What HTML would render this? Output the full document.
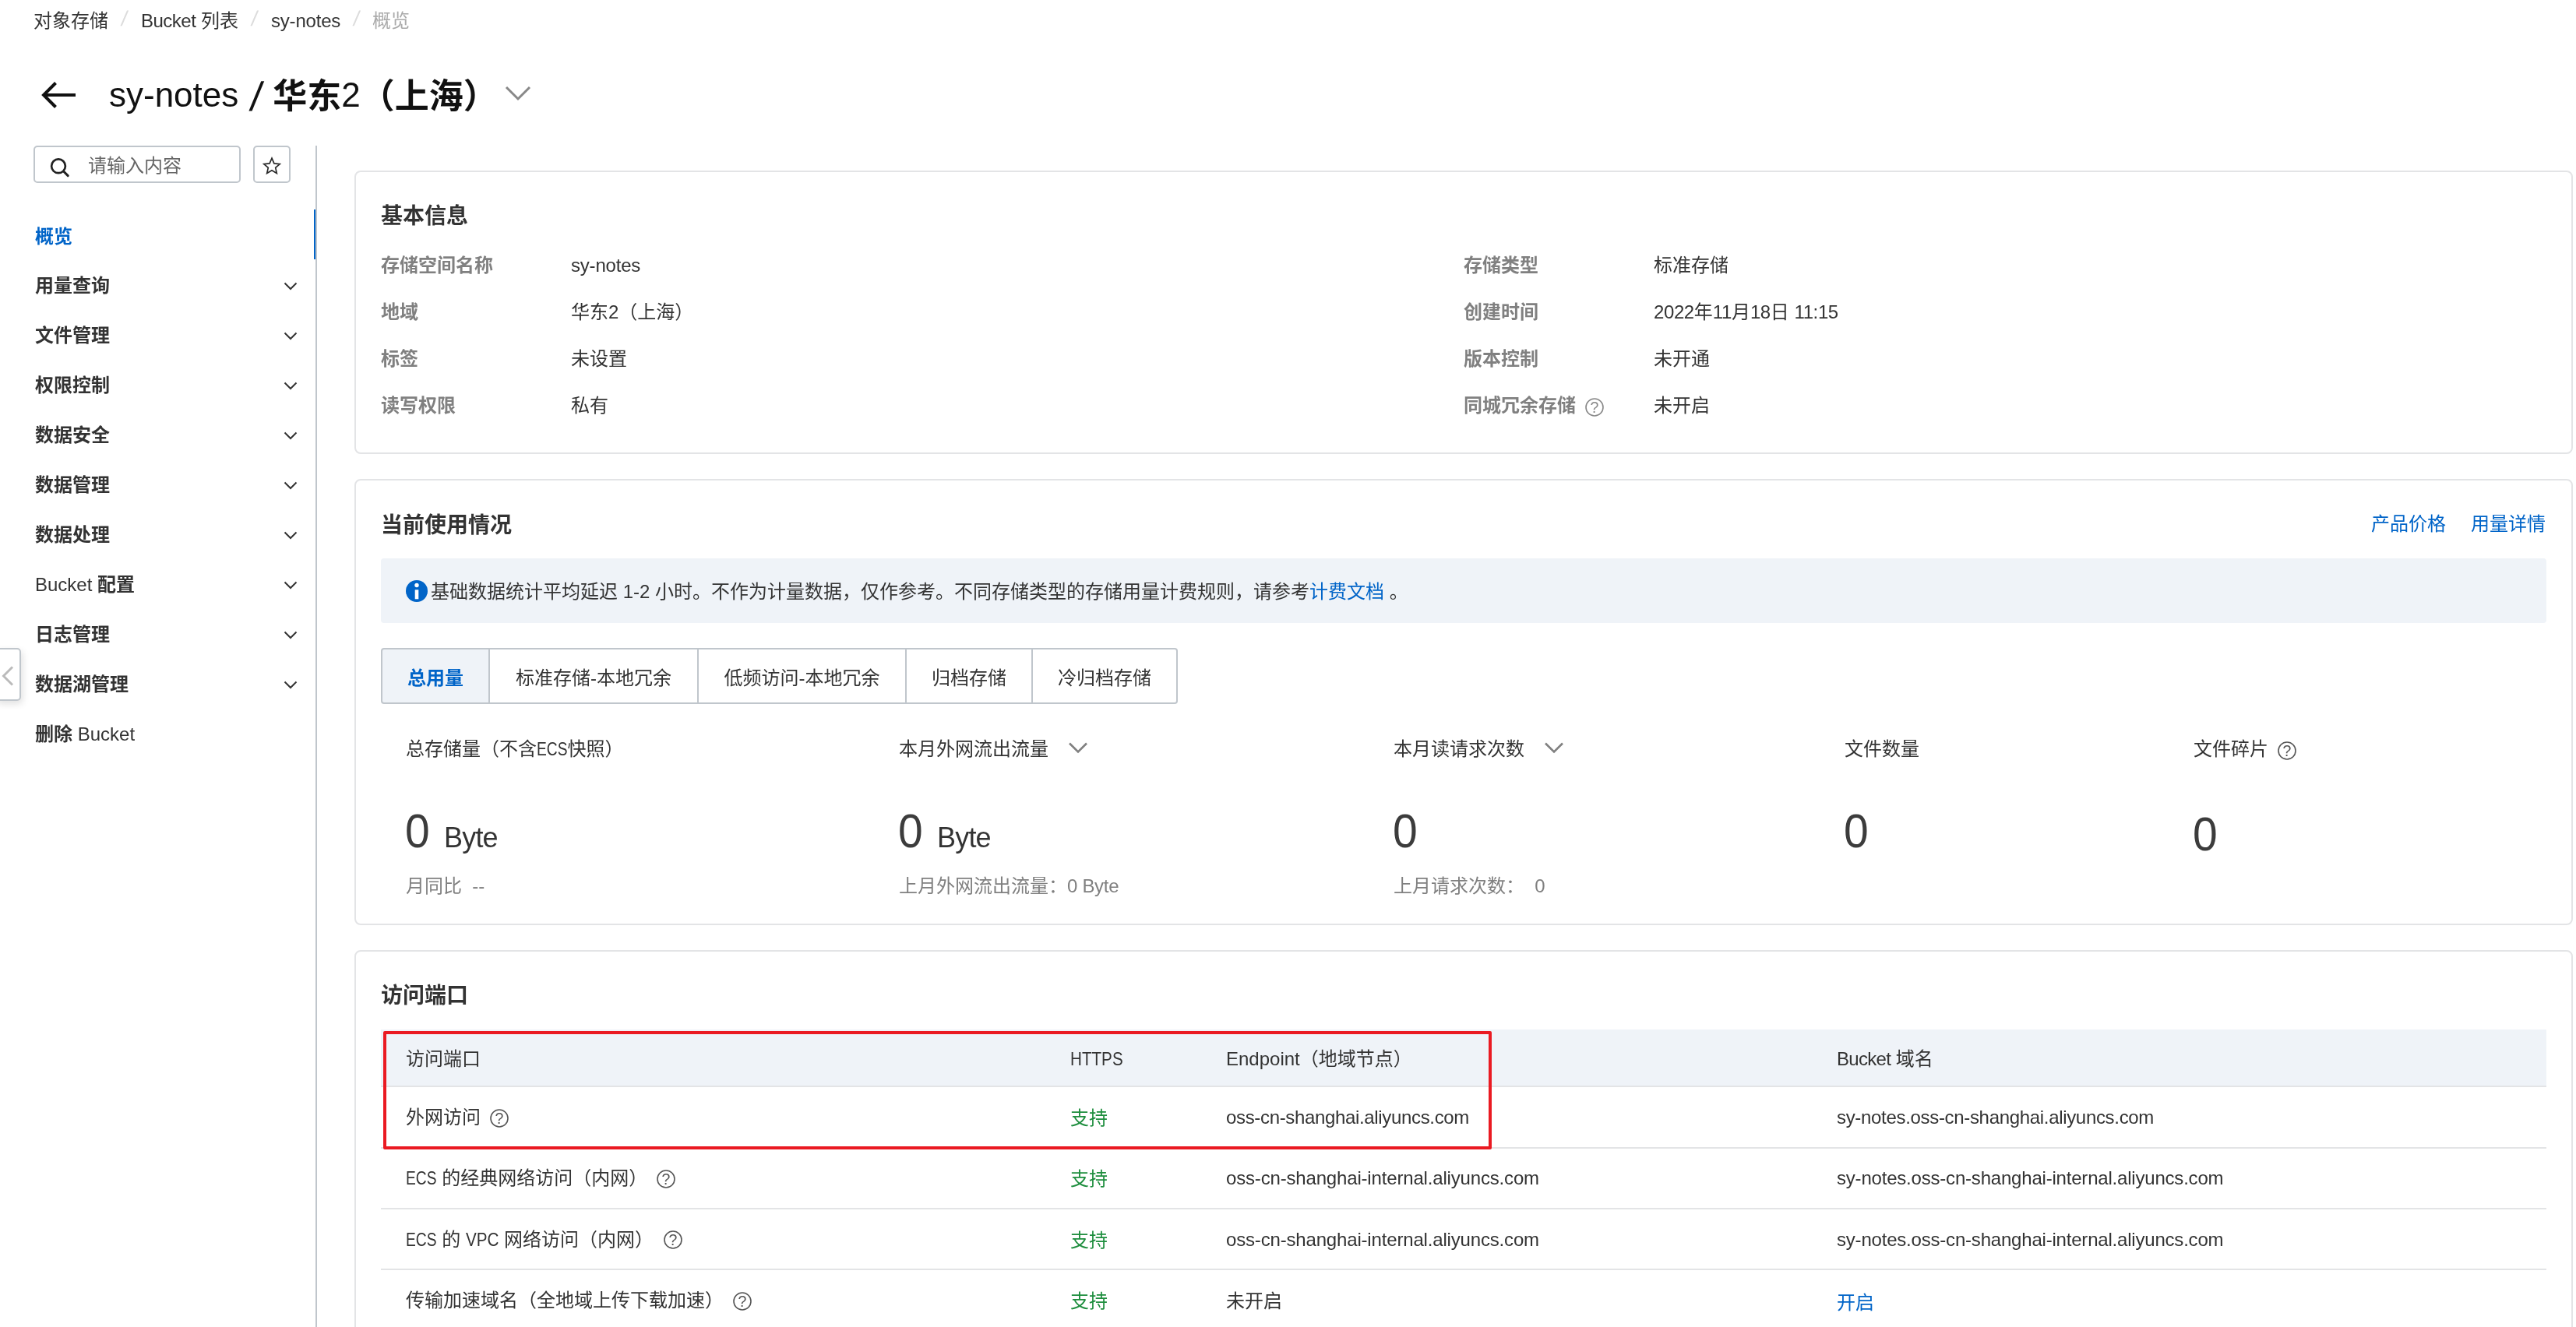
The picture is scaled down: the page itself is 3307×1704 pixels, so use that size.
<!DOCTYPE html>
<html lang="zh-CN">
<head>
<meta charset="utf-8">
<title>sy-notes - 概览</title>
<style>
*{box-sizing:border-box;margin:0;padding:0}
html,body{width:3307px;height:1704px;overflow:hidden;background:#fff}
body{position:relative;will-change:transform;font-family:"Liberation Sans","Noto Sans CJK SC",sans-serif;font-size:24px;color:#333;-webkit-font-smoothing:antialiased}
.t{position:absolute;white-space:nowrap;line-height:40px;height:40px;font-size:24px}
.b{font-weight:700}
.n{font-weight:400}
.g{color:#808080}
.lk{color:#0064c8}
.ok{color:#1e8e3e}
.abs{position:absolute}
.l{letter-spacing:-.3px}
.sx{display:inline-block;transform-origin:0 50%}
.ecs{transform:scaleX(.8);margin-right:-9.9px}
.vpc{transform:scaleX(.86);margin-right:-6.9px}
.sl{color:#dcdcdc;font-size:27px;transform:skewX(-9deg)}
svg{position:absolute;overflow:visible}
.card{position:absolute;left:455px;width:2848px;border:2px solid #e3e4e6;border-radius:8px;background:#fff}
.h{font-size:28px;font-weight:700;color:#333;left:489px}
.lab{font-weight:700;color:#808080}
.hl{position:absolute;left:489px;width:2780px;height:2px;background:#e3e4e6}
.big{font-size:62px;line-height:80px;height:80px;color:#3c3c3c;transform:scaleX(.92);transform-origin:0 50%}
.unit{font-size:36px;line-height:50px;height:50px;color:#333}
.tab{position:absolute;top:832px;height:72px;border:2px solid #c0c6cc;border-left-width:0;line-height:73px;text-align:center;font-size:24px;white-space:nowrap;background:#fff}
</style>
</head>
<body>

<!-- breadcrumb -->
<div class="t" style="left:43px;top:7px">对象存储</div>
<div class="t sl" style="left:156px;top:4px">/</div>
<div class="t" style="left:181px;top:7px"><span style="letter-spacing:-.5px">Bucket</span> 列表</div>
<div class="t sl" style="left:323px;top:4px">/</div>
<div class="t" style="left:348px;top:7px;letter-spacing:-.2px">sy-notes</div>
<div class="t sl" style="left:454px;top:4px">/</div>
<div class="t" style="left:478px;top:7px;color:#aaa">概览</div>

<!-- title -->
<svg style="left:50px;top:100px" width="52" height="44" viewBox="0 0 52 44"><path d="M21.5 6.5 L6 22 L21.5 37.5 M6 22 H47" fill="none" stroke="#111" stroke-width="4" stroke-linejoin="miter"/></svg>
<div class="t" id="title" style="left:140px;top:92px;font-size:44px;line-height:60px;height:60px;color:#111">sy-notes <span style="display:inline-block;font-size:52px;line-height:0;transform:skewX(-8deg);position:relative;top:5px;margin:0 1px 0 3px">/</span> <span class="b" style="margin-left:1px;position:relative;top:2px">华东</span>2<span class="b" style="position:relative;top:2px">（上海）</span></div>
<svg style="left:648px;top:110px" width="34" height="20" viewBox="0 0 34 20"><path d="M2 2 L17 17 L32 2" fill="none" stroke="#888" stroke-width="3"/></svg>

<!-- sidebar -->
<div class="abs" style="left:43px;top:187px;width:266px;height:48px;border:2px solid #c0c6cc;border-radius:5px"></div>
<svg style="left:62px;top:200px" width="30" height="30" viewBox="0 0 30 30"><circle cx="13" cy="13.3" r="8.9" fill="none" stroke="#222" stroke-width="2.7"/><path d="M19.6 20 L25.2 25.6" stroke="#222" stroke-width="3" stroke-linecap="round"/></svg>
<div class="t" style="left:113px;top:193px;color:#666">请输入内容</div>
<div class="abs" style="left:325px;top:187px;width:48px;height:48px;border:2px solid #c0c6cc;border-radius:5px"></div>
<svg style="left:337px;top:201px" width="24" height="24" viewBox="0 0 24 24"><path d="M12 2.2 L14.9 8.9 L22.2 9.6 L16.7 14.4 L18.3 21.5 L12 17.8 L5.7 21.5 L7.3 14.4 L1.8 9.6 L9.1 8.9 Z" fill="none" stroke="#2a2a2a" stroke-width="1.7" stroke-linejoin="miter"/></svg>

<div class="abs" style="left:405px;top:187px;width:2px;height:1517px;background:#c0c6cc"></div>
<div class="abs" style="left:403px;top:269px;width:2px;height:64px;background:#0064c8"></div>

<div class="t b lk" style="left:45px;top:284px">概览</div>
<div class="t b" style="left:45px;top:347px">用量查询</div>
<div class="t b" style="left:45px;top:411px">文件管理</div>
<div class="t b" style="left:45px;top:475px">权限控制</div>
<div class="t b" style="left:45px;top:539px">数据安全</div>
<div class="t b" style="left:45px;top:603px">数据管理</div>
<div class="t b" style="left:45px;top:667px">数据处理</div>
<div class="t b" style="left:45px;top:731px"><span class="n">Bucket</span> 配置</div>
<div class="t b" style="left:45px;top:795px">日志管理</div>
<div class="t b" style="left:45px;top:859px">数据湖管理</div>
<div class="t b" style="left:45px;top:923px">删除 <span class="n">Bucket</span></div>

<svg style="left:364px;top:362px" width="18" height="590" viewBox="0 0 18 590">
<g fill="none" stroke="#333" stroke-width="2">
<path d="M1.5 1.5 L9 9 L16.5 1.5"/>
<path d="M1.5 65.5 L9 73 L16.5 65.5"/>
<path d="M1.5 129.5 L9 137 L16.5 129.5"/>
<path d="M1.5 193.5 L9 201 L16.5 193.5"/>
<path d="M1.5 257.5 L9 265 L16.5 257.5"/>
<path d="M1.5 321.5 L9 329 L16.5 321.5"/>
<path d="M1.5 385.5 L9 393 L16.5 385.5"/>
<path d="M1.5 449.5 L9 457 L16.5 449.5"/>
<path d="M1.5 513.5 L9 521 L16.5 513.5"/>
</g></svg>

<!-- collapse handle -->
<div class="abs" style="left:-6px;top:832px;width:33px;height:68px;border:2px solid #c0c6cc;border-radius:5px;background:#fff;box-shadow:2px 4px 10px rgba(0,0,0,.12)"></div>
<svg style="left:2px;top:855px" width="16" height="26" viewBox="0 0 16 26"><path d="M14 1.5 L2.5 13 L14 24.5" fill="none" stroke="#bbb" stroke-width="3"/></svg>

<!-- card 1 -->
<div class="card" style="top:219px;height:364px"></div>
<div class="t h" style="top:258px">基本信息</div>
<div class="t lab" style="left:489px;top:321px">存储空间名称</div><div class="t" style="left:733px;top:321px;letter-spacing:-.2px">sy-notes</div>
<div class="t lab" style="left:489px;top:381px">地域</div><div class="t" style="left:733px;top:381px">华东2（上海）</div>
<div class="t lab" style="left:489px;top:441px">标签</div><div class="t" style="left:733px;top:441px">未设置</div>
<div class="t lab" style="left:489px;top:501px">读写权限</div><div class="t" style="left:733px;top:501px">私有</div>
<div class="t lab" style="left:1879px;top:321px">存储类型</div><div class="t" style="left:2123px;top:321px">标准存储</div>
<div class="t lab" style="left:1879px;top:381px">创建时间</div><div class="t" style="left:2123px;top:381px"><span class="l" style="letter-spacing:-.4px">2022</span>年<span style="letter-spacing:-.4px">11</span>月<span style="letter-spacing:-.4px">18</span>日 <span style="letter-spacing:-.4px">11:15</span></div>
<div class="t lab" style="left:1879px;top:441px">版本控制</div><div class="t" style="left:2123px;top:441px">未开通</div>
<div class="t lab" style="left:1879px;top:501px">同城冗余存储</div><div class="t" style="left:2123px;top:501px">未开启</div>
<svg class="q" style="left:2035px;top:511px" width="24" height="24" viewBox="0 0 24 24"><circle cx="12" cy="12" r="11" fill="none" stroke="#888" stroke-width="1.6"/><text x="12" y="18.8" text-anchor="middle" font-size="19.5" fill="#888" font-family="Liberation Sans, sans-serif">?</text></svg>

<!-- card 2 -->
<div class="card" style="top:615px;height:573px"></div>
<div class="t h" style="top:655px">当前使用情况</div>
<div class="t lk" style="left:3044px;top:653px">产品价格</div>
<div class="t lk" style="left:3172px;top:653px">用量详情</div>
<div class="abs" style="left:489px;top:717px;width:2780px;height:83px;background:#eff3f8;border-radius:4px"></div>
<svg style="left:521px;top:745px" width="28" height="28" viewBox="0 0 28 28"><circle cx="14" cy="14" r="14" fill="#0064c8"/><circle cx="14" cy="6.5" r="2.7" fill="#fff"/><rect x="11.7" y="12.3" width="4.6" height="12" fill="#fff"/></svg>
<div class="t" style="left:553px;top:740px">基础数据统计平均延迟 1-2 小时。不作为计量数据，仅作参考。不同存储类型的存储用量计费规则，请参考<span class="lk">计费文档</span> 。</div>

<div class="tab b lk" style="left:489px;width:140px;border-left-width:2px;border-radius:4px 0 0 4px;background:#eff3f8">总用量</div>
<div class="tab" style="left:629px;width:268px">标准存储-本地冗余</div>
<div class="tab" style="left:897px;width:267px">低频访问-本地冗余</div>
<div class="tab" style="left:1164px;width:162px">归档存储</div>
<div class="tab" style="left:1326px;width:186px;border-radius:0 4px 4px 0">冷归档存储</div>

<div class="t" style="left:521px;top:942px">总存储量（不含<span class="sx ecs">ECS</span>快照）</div>
<div class="t" style="left:1154px;top:942px">本月外网流出流量</div>
<svg style="left:1371px;top:953px" width="26" height="16" viewBox="0 0 26 16"><path d="M2 1.5 L13 12.5 L24 1.5" fill="none" stroke="#808080" stroke-width="2.6"/></svg>
<div class="t" style="left:1789px;top:942px">本月读请求次数</div>
<svg style="left:1982px;top:953px" width="26" height="16" viewBox="0 0 26 16"><path d="M2 1.5 L13 12.5 L24 1.5" fill="none" stroke="#808080" stroke-width="2.6"/></svg>
<div class="t" style="left:2368px;top:942px">文件数量</div>
<div class="t" style="left:2816px;top:942px">文件碎片</div>
<svg class="q" style="left:2924px;top:952px" width="24" height="24" viewBox="0 0 24 24"><circle cx="12" cy="12" r="11" fill="none" stroke="#555" stroke-width="1.6"/><text x="12" y="18.8" text-anchor="middle" font-size="19.5" fill="#555" font-family="Liberation Sans, sans-serif">?</text></svg>

<div class="t big" style="left:520px;top:1027px">0</div><div class="t unit" style="left:570px;top:1051px;letter-spacing:-.8px">Byte</div>
<div class="t big" style="left:1153px;top:1027px">0</div><div class="t unit" style="left:1203px;top:1051px;letter-spacing:-.8px">Byte</div>
<div class="t big" style="left:1788px;top:1027px">0</div>
<div class="t big" style="left:2367px;top:1027px">0</div>
<div class="t big" style="left:2815px;top:1031px">0</div>

<div class="t g" style="left:521px;top:1118px">月同比&nbsp; --</div>
<div class="t g" style="left:1154px;top:1118px">上月外网流出流量：<span class="l">0 Byte</span></div>
<div class="t g" style="left:1789px;top:1118px">上月请求次数：&nbsp; 0</div>

<!-- card 3 -->
<div class="card" style="top:1220px;height:520px"></div>
<div class="t h" style="top:1259px">访问端口</div>
<div class="abs" style="left:489px;top:1322px;width:2780px;height:73px;background:#eff3f8"></div>
<div class="hl" style="top:1394px"></div>
<div class="hl" style="top:1473px"></div>
<div class="hl" style="top:1551px"></div>
<div class="hl" style="top:1629px"></div>

<div class="t" style="left:521px;top:1340px">访问端口</div>
<div class="t" style="left:1374px;top:1340px"><span class="sx" style="transform:scaleX(.86)">HTTPS</span></div>
<div class="t" style="left:1574px;top:1340px">Endpoint（地域节点）</div>
<div class="t" style="left:2358px;top:1340px"><span style="letter-spacing:-.7px">Bucket</span> 域名</div>

<div class="t" style="left:521px;top:1415px">外网访问</div>
<div class="t ok" style="left:1374px;top:1416px">支持</div>
<div class="t" style="left:1574px;top:1415px;letter-spacing:-.34px">oss-cn-shanghai.aliyuncs.com</div>
<div class="t" style="left:2358px;top:1415px;letter-spacing:-.32px">sy-notes.oss-cn-shanghai.aliyuncs.com</div>

<div class="t" style="left:521px;top:1493px"><span class="sx ecs">ECS</span> 的经典网络访问（内网）</div>
<div class="t ok" style="left:1374px;top:1494px">支持</div>
<div class="t" style="left:1574px;top:1493px;letter-spacing:-.17px">oss-cn-shanghai-internal.aliyuncs.com</div>
<div class="t" style="left:2358px;top:1493px;letter-spacing:-.2px">sy-notes.oss-cn-shanghai-internal.aliyuncs.com</div>

<div class="t" style="left:521px;top:1572px"><span class="sx ecs">ECS</span> 的 <span class="sx vpc">VPC</span> 网络访问（内网）</div>
<div class="t ok" style="left:1374px;top:1573px">支持</div>
<div class="t" style="left:1574px;top:1572px;letter-spacing:-.17px">oss-cn-shanghai-internal.aliyuncs.com</div>
<div class="t" style="left:2358px;top:1572px;letter-spacing:-.2px">sy-notes.oss-cn-shanghai-internal.aliyuncs.com</div>

<div class="t" style="left:521px;top:1650px">传输加速域名（全地域上传下载加速）</div>
<div class="t ok" style="left:1374px;top:1651px">支持</div>
<div class="t" style="left:1574px;top:1651px">未开启</div>
<div class="t lk" style="left:2358px;top:1653px">开启</div>

<svg class="q" style="left:629px;top:1424px" width="24" height="24" viewBox="0 0 24 24"><circle cx="12" cy="12" r="11" fill="none" stroke="#555" stroke-width="1.6"/><text x="12" y="18.8" text-anchor="middle" font-size="19.5" fill="#555" font-family="Liberation Sans, sans-serif">?</text></svg>
<svg class="q" style="left:843px;top:1502px" width="24" height="24" viewBox="0 0 24 24"><circle cx="12" cy="12" r="11" fill="none" stroke="#555" stroke-width="1.6"/><text x="12" y="18.8" text-anchor="middle" font-size="19.5" fill="#555" font-family="Liberation Sans, sans-serif">?</text></svg>
<svg class="q" style="left:852px;top:1580px" width="24" height="24" viewBox="0 0 24 24"><circle cx="12" cy="12" r="11" fill="none" stroke="#555" stroke-width="1.6"/><text x="12" y="18.8" text-anchor="middle" font-size="19.5" fill="#555" font-family="Liberation Sans, sans-serif">?</text></svg>
<svg class="q" style="left:941px;top:1659px" width="24" height="24" viewBox="0 0 24 24"><circle cx="12" cy="12" r="11" fill="none" stroke="#555" stroke-width="1.6"/><text x="12" y="18.8" text-anchor="middle" font-size="19.5" fill="#555" font-family="Liberation Sans, sans-serif">?</text></svg>

<!-- red annotation box -->
<div class="abs" style="left:492px;top:1324px;width:1423px;height:152px;border:4px solid #ea1a22;border-radius:2px"></div>

</body>
</html>
